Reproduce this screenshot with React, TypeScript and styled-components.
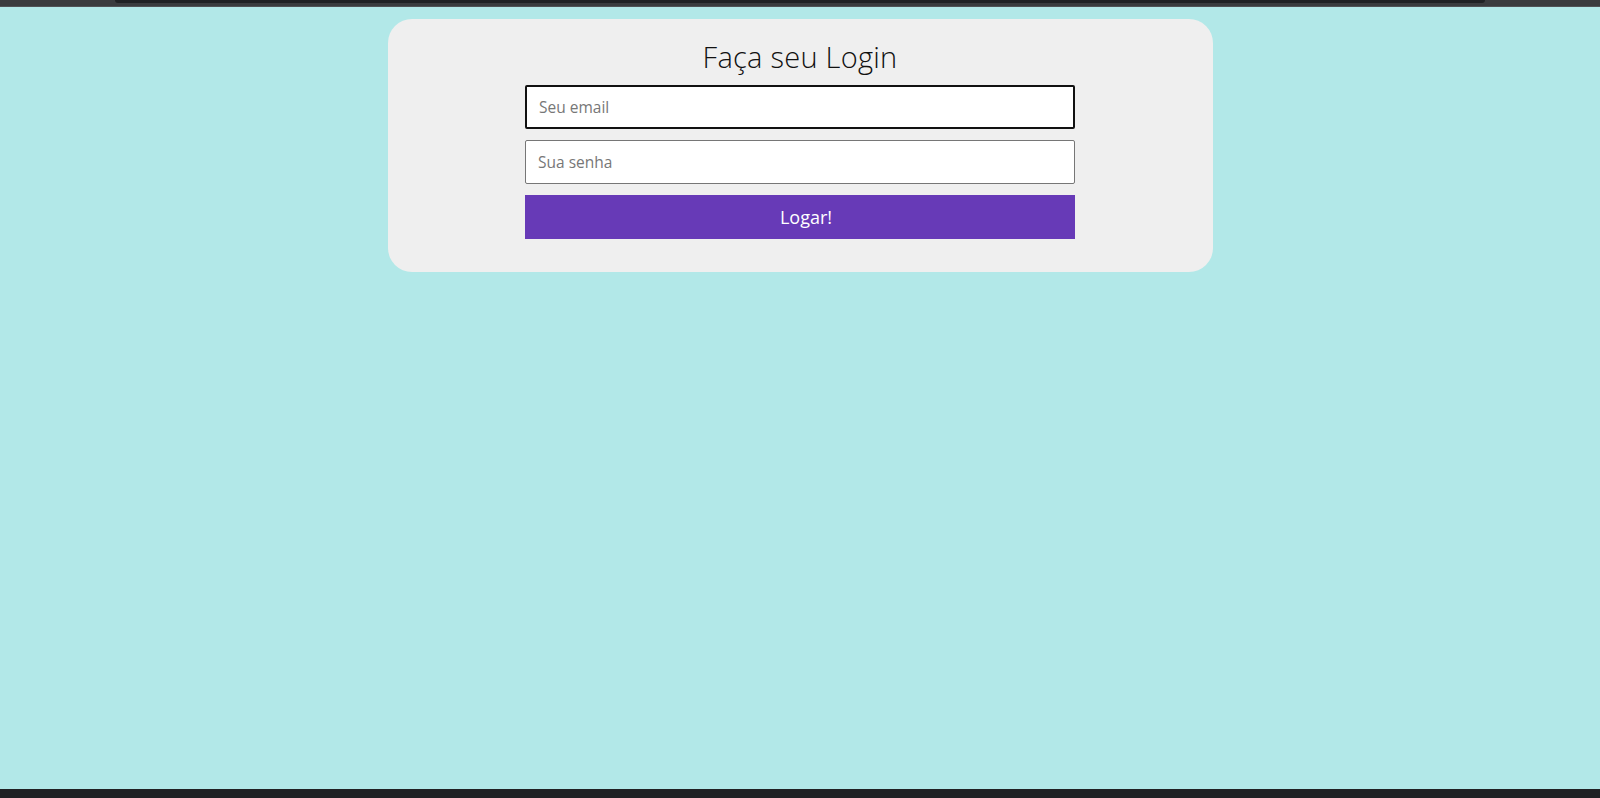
import React from "react";
import styled, { createGlobalStyle } from "styled-components";

const Global = createGlobalStyle`
  html, body { margin: 0; padding: 0; }
  body { background: #b2e8e8; font-family: "Open Sans", "Noto Sans", sans-serif; }
  * { box-sizing: border-box; }
`;

const Page = styled.div`
  display: flex;
  flex-direction: column;
  height: 798px;
  overflow: hidden;
`;

const TopBar = styled.div`
  height: 7px;
  background: #3a3b3e;
  border-bottom: 1px solid #505155;
  display: flex;
  justify-content: center;
  flex-shrink: 0;
`;

const TopInner = styled.div`
  width: 1370px;
  height: 3px;
  background: #202124;
  border-radius: 0 0 3px 3px;
`;

const Main = styled.main`
  flex: 1;
  background: #b2e8e8;
  padding-top: 12px;
`;

const Card = styled.section`
  width: 825px;
  margin: 0 auto;
  background: #efefef;
  border-radius: 24px;
  padding: 19px 0 33px;
  display: flex;
  flex-direction: column;
  align-items: center;
`;

const Title = styled.h1`
  margin: 0 0 10px;
  font-weight: 300;
  font-size: 29px;
  line-height: 37px;
  letter-spacing: 0.25px;
  color: #111;
`;

const Form = styled.form`
  width: 550px;
  display: flex;
  flex-direction: column;
  gap: 11px;
`;

const Input = styled.input<{ $focused?: boolean }>`
  height: 44px;
  width: 100%;
  padding: 0 12px;
  font-family: "Open Sans", "Noto Sans", sans-serif;
  font-size: 15.5px;
  background: #fff;
  color: #222;
  border: ${(p) => (p.$focused ? "2px solid #111" : "1px solid #767676")};
  border-radius: 2px;
  outline: none;
  &::placeholder { color: #777; }
`;

const Button = styled.button`
  height: 44px;
  width: 100%;
  border: none;
  padding: 0 0 0 12px;
  background: #673ab7;
  color: #fff;
  font-family: "Open Sans", "Noto Sans", sans-serif;
  font-size: 18px;
  cursor: pointer;
`;

const BottomBar = styled.div`
  height: 9px;
  background: #202124;
  flex-shrink: 0;
`;

export default function App() {
  return (
    <>
      <Global />
      <Page>
        <TopBar>
          <TopInner />
        </TopBar>
        <Main>
          <Card>
            <Title>Faça seu Login</Title>
            <Form onSubmit={(e) => e.preventDefault()}>
              <Input $focused type="email" placeholder="Seu email" />
              <Input type="password" placeholder="Sua senha" />
              <Button type="submit">Logar!</Button>
            </Form>
          </Card>
        </Main>
        <BottomBar />
      </Page>
    </>
  );
}
